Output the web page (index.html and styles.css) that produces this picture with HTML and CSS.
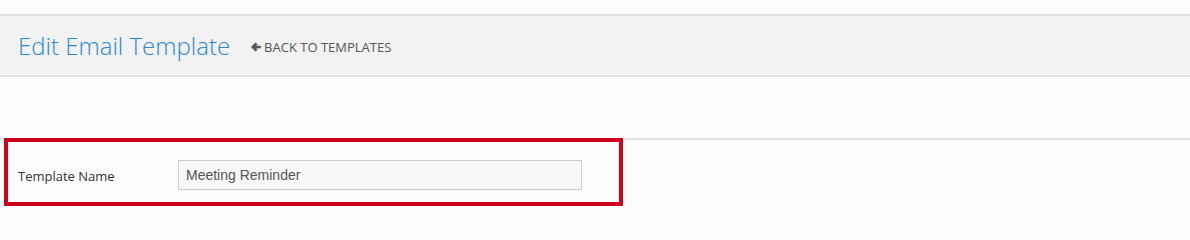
FILE: index.html
```html
<!DOCTYPE html>
<html>
<head>
<meta charset="utf-8">
<link rel="stylesheet" href="styles.css">
</head>
<body>
<div class="page">
  <div class="header">
    <h1 class="title">Edit Email Template</h1>
    <a class="back" href="#">
      <svg class="arrow" viewBox="0 0 10 10" width="10" height="10"><path d="M0.3 5 L4.6 0.7 L6.3 2.4 L4.7 4 H9.7 V6.1 H4.7 L6.3 7.6 L4.6 9.3 Z" fill="#555" stroke="#555" stroke-width="0.5" stroke-linejoin="round"/></svg>
      <span>BACK TO TEMPLATES</span>
    </a>
  </div>
  <div class="spacer"></div>
  <div class="form">
    <div class="row">
      <label class="label">Template Name</label>
      <input class="input" type="text" value="Meeting Reminder">
    </div>
    <div class="highlight"></div>
  </div>
</div>
</body>
</html>
```

FILE: styles.css
```css
html, body {
  margin: 0;
  padding: 0;
  background: #fcfcfc;
}
.page {
  padding-top: 14px;
  font-family: "Open Sans", sans-serif;
}
.header {
  display: flex;
  align-items: center;
  height: 59px;
  background: #f2f2f2;
  border-top: 2px solid #e2e2e2;
  border-bottom: 2px solid #e2e2e2;
  padding-left: 18px;
}
.title {
  margin: 0;
  font-family: "Open Sans", sans-serif;
  font-weight: 300;
  font-size: 24px;
  color: #2a86d5;
  line-height: 1;
  padding-top: 1px;
}
.back {
  display: flex;
  align-items: center;
  margin-left: 21px;
  color: #555;
  text-decoration: none;
  font-size: 13px;
  padding-top: 3px;
}
.arrow {
  margin-right: 3px;
}
.spacer {
  height: 61px;
}
.form {
  position: relative;
  border-top: 2px solid #e2e2e2;
  height: 73px;
}
.row {
  display: flex;
  align-items: center;
  padding-top: 20px;
  padding-left: 18px;
}
.label {
  width: 160px;
  font-size: 13px;
  color: #333;
  padding-top: 1px;
}
.input {
  box-sizing: border-box;
  width: 404px;
  height: 30px;
  margin: 0;
  border: 1px solid #cccccc;
  background: #f8f8f8;
  padding: 0 7px;
  font-family: "Liberation Sans", Arial, sans-serif;
  font-size: 14px;
  color: #555;
  outline: none;
}
.highlight {
  position: absolute;
  left: 4px;
  top: -2px;
  width: 619px;
  height: 68px;
  box-sizing: border-box;
  border: 4px solid #d0021b;
}
```
